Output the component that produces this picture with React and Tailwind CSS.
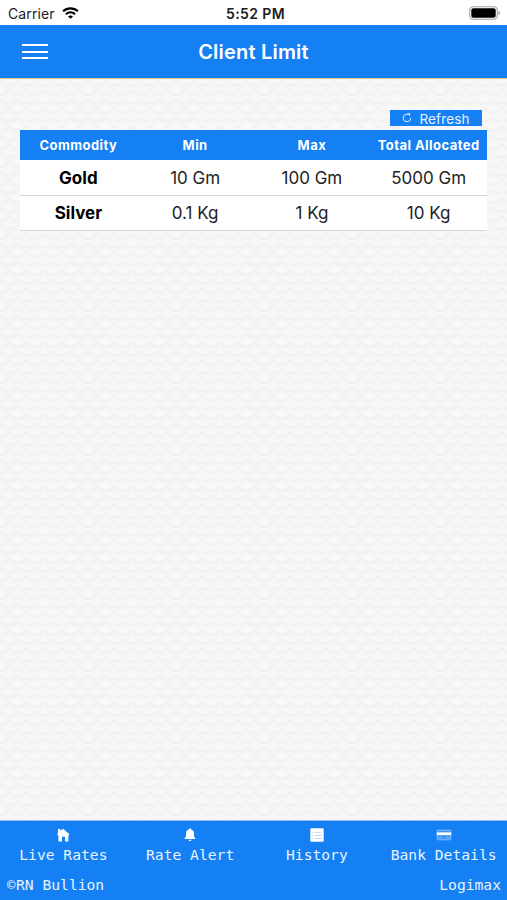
const rows = [
    { name: 'Gold', min: '10 Gm', max: '100 Gm', total: '5000 Gm' },
    { name: 'Silver', min: '0.1 Kg', max: '1 Kg', total: '10 Kg' },
];

function WifiIcon() {
    return (
        <svg viewBox="0 0 18 13" className="w-[17px] h-[12px]" fill="none" stroke="#000" strokeWidth="2.3">
            <path d="M1 4.6C5.5 .4 12.5 .4 17 4.6" />
            <path d="M4 7.8c2.9-2.6 7.1-2.6 10 0" />
            <path d="M9 12.8 6.3 10.2c1.5-1.3 3.9-1.3 5.4 0z" fill="#000" stroke="none" />
        </svg>
    );
}

function BatteryIcon() {
    return (
        <svg viewBox="0 0 32 14" className="w-8 h-3.5">
            <rect x=".7" y=".7" width="27.6" height="12.6" rx="3.6" fill="#fff" stroke="#a3a3a3" strokeWidth="1.1" />
            <rect x="2.3" y="2.3" width="24.4" height="9.4" rx="2" fill="#000" />
            <path d="M29.6 4.8c1.6.6 1.6 3.8 0 4.4z" fill="#8a8a8a" />
        </svg>
    );
}

function RefreshIcon() {
    return (
        <svg viewBox="0 0 10 10" className="w-2.5 h-2.5" fill="none" stroke="#d9ebff" strokeWidth="1">
            <path d="M8.8 5A3.8 3.8 0 1 1 5 1.2h2" />
            <path d="M5.2.2H7.6V3" />
        </svg>
    );
}

function HomeIcon() {
    return (
        <svg viewBox="0 0 14 14" className="w-3.5 h-3.5" fill="#fff">
            <path d="M2 1h2.5v1.7L7.2.8l6.3 5.5-.7 1-.4-.2v6.4H9.1V8.8H6v4.7H2.4V7.1l-.5.3-.8-1L2 5.2z" />
        </svg>
    );
}

function BellIcon() {
    return (
        <svg viewBox="0 0 14 14" className="w-3.5 h-3.5" fill="#fff">
            <path d="M7 .6c.7 0 1.1.4 1.1 1 1.9.5 2.9 1.9 2.9 3.9v2.7c0 .8 1.5 1.5 1.5 2.9h-11C1.500 9.700 3 9 3 8.200V5.500c0-2 1-3.400 2.900-3.900 0-.6.4-1 1.100-1zM5.500 11.800h3c-.2.900-.7 1.300-1.500 1.300s-1.300-.4-1.500-1.300z" />
        </svg>
    );
}

function ListIcon() {
    return (
        <svg viewBox="0 0 14 14" className="w-3.5 h-3.5">
            <rect x=".3" y=".3" width="13.4" height="13.4" rx=".8" fill="#fff" />
            <path d="M2.3 4.5h1.2M4.8 4.5h7M2.3 7.5h1.2M4.8 7.5h7M2.3 10.5h1.2M4.8 10.5h7" stroke="#a9d0fc" strokeWidth=".7" />
        </svg>
    );
}

function CardIcon() {
    return (
        <svg viewBox="0 0 16 14" className="w-4 h-3.5">
            <rect x="1.2" y="2.2" width="13.6" height="9.6" rx="1.2" fill="#3d97f8" stroke="#9dcbff" strokeWidth=".8" />
            <rect x=".8" y="4.4" width="14.4" height="2.7" fill="#fff" />
            <path d="M3 9.5h2M10.5 9.5h2.5" stroke="#9dcbff" strokeWidth=".9" />
        </svg>
    );
}

const tabs = [
    { label: 'Live Rates', Icon: HomeIcon },
    { label: 'Rate Alert', Icon: BellIcon },
    { label: 'History', Icon: ListIcon },
    { label: 'Bank Details', Icon: CardIcon },
];

// Faint embossed scales behind the table
function ScalePattern() {
    return (
        <svg className="absolute inset-0 w-full h-full" aria-hidden="true">
            <defs>
                <pattern id="scales" width="17.6" height="18" patternUnits="userSpaceOnUse">
                    <g fill="none" stroke="#f1f1f1" strokeWidth="2" strokeLinecap="round">
                        <path d="M1 2.500 4.500 6.500h8.600L16.600 2.500" />
                        <path d="M-4.300 15.500h8.600l3.500-4M9.800 11.500l3.500 4h8.600" />
                    </g>
                    <g fill="#f8f8f8">
                        <ellipse cx="8.800" cy="2" rx="5" ry="2" />
                        <ellipse cx="0" cy="11" rx="5" ry="2" />
                        <ellipse cx="17.600" cy="11" rx="5" ry="2" />
                    </g>
                </pattern>
            </defs>
            <rect width="100%" height="100%" fill="url(#scales)" />
        </svg>
    );
}

export default function App() {
    return (
        <div className="w-full h-screen flex flex-col overflow-hidden bg-[#f6f6f6] font-[Inter,sans-serif]">
            {/* Status bar */}
            <div className="h-[25px] shrink-0 bg-white grid grid-cols-3 items-center pl-2 pr-1.5 pt-px text-[#1c1c1c]">
                <div className="flex items-center gap-[7px] text-[14px] tracking-[0.1px]">
                    Carrier <WifiIcon />
                </div>
                <p className="text-center pl-0.5 text-[14px] font-semibold tracking-[0.4px] whitespace-nowrap">5:52 PM</p>
                <div className="flex justify-end"><BatteryIcon /></div>
            </div>

            {/* Header */}
            <header className="h-[54px] shrink-0 bg-[#1480f3] border-b border-[#d8c98a] grid grid-cols-[1fr_auto_1fr] items-center px-[22px]">
                <button aria-label="Menu" className="flex flex-col gap-[4.5px] w-[26px]">
                    <span className="h-[2px] bg-white" />
                    <span className="h-[2px] bg-white" />
                    <span className="h-[2px] bg-white" />
                </button>
                <h1 className="text-white text-[20px] font-semibold tracking-[0.2px]">Client Limit</h1>
            </header>

            <main className="relative flex-1 px-5 pt-[31px]">
                <ScalePattern />
                <div className="relative">
                    <div className="flex justify-end pr-[5px]">
                        <button className="w-[92px] h-4 bg-[#1480f3] text-[#e8f3ff] text-[13.5px] leading-4 flex items-center justify-center gap-[7px] tracking-[0.15px]">
                            <RefreshIcon /> <span className="pt-0.5">Refresh</span>
                        </button>
                    </div>

                    <table className="mt-1 w-full table-fixed text-center">
                        <thead>
                            <tr className="h-[30px] bg-[#1480f3] text-white text-[13px] tracking-[0.45px]">
                                <th className="font-bold pt-0.5">Commodity</th>
                                <th className="font-bold pt-0.5">Min</th>
                                <th className="font-bold pt-0.5">Max</th>
                                <th className="font-bold pt-0.5 whitespace-nowrap">Total Allocated</th>
                            </tr>
                        </thead>
                        <tbody>
                            {rows.map((row) => (
                                <tr key={row.name} className="h-[35px] bg-white border-b-[1.5px] border-[#d6d6d6] text-[17px] text-[#222]">
                                    <td className="font-bold pt-0.5 text-black">{row.name}</td>
                                    <td className="pt-0.5">{row.min}</td>
                                    <td className="pt-0.5">{row.max}</td>
                                    <td className="pt-0.5">{row.total}</td>
                                </tr>
                            ))}
                        </tbody>
                    </table>
                </div>
            </main>

            {/* Bottom navigation */}
            <footer className="h-[80px] shrink-0 bg-[#1480f3] border-t border-[#8fc0f5] text-[#e8f3ff] text-[14.65px] font-['DejaVu_Sans_Mono',monospace]">
                <nav className="grid grid-cols-4 pt-[7px]">
                    {tabs.map(({ label, Icon }) => (
                        <a key={label} className="flex flex-col items-center gap-[3px] leading-[20px] whitespace-nowrap">
                            <Icon /> {label}
                        </a>
                    ))}
                </nav>
                <div className="flex justify-between pl-[7px] pr-[6px] pt-[10px] leading-[20px]">
                    <p><span className="inline-block w-[9px] text-[14px] tracking-tighter">©</span>RN Bullion</p>
                    <p>Logimax</p>
                </div>
            </footer>
        </div>
    );
}
